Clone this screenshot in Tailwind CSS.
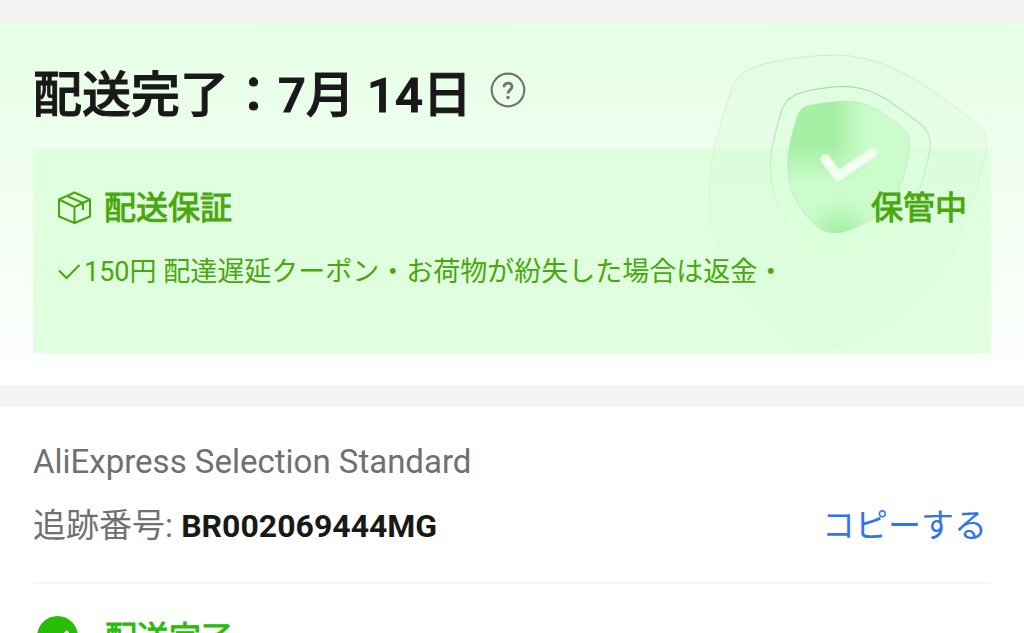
<!DOCTYPE html>
<html lang="ja">
<head>
    <meta charset="UTF-8">
    <meta name="viewport" content="width=device-width, initial-scale=1.0">
    <title>配送完了</title>
    <script src="https://cdn.jsdelivr.net/npm/@tailwindcss/browser@4"></script>
</head>
<body class="bg-white font-['Roboto','Noto_Sans_CJK_JP',sans-serif] text-[#191919] overflow-hidden">
    <div class="h-[22px] bg-[#f4f4f4]"></div>

    <!-- Delivery status -->
    <header class="relative bg-linear-to-b from-[#e5ffe5] to-white px-[33px] pt-[38px] pb-8">
        <div class="flex items-start">
            <h1 class="text-[49px] leading-[72px] font-medium [-webkit-text-stroke:1px_currentColor]">配送完了：7月 14日</h1>
            <button type="button" aria-label="ヘルプ" class="ml-[18px] mt-3">
                <svg class="size-9" viewBox="0 0 36 36" fill="none" stroke="#707570" stroke-width="2.2">
                    <circle cx="18" cy="18" r="16.3"/>
                    <path d="M14 15.200c0-5.400 8-5.400 8-.6 0 3.200-4 3.400-4 7" stroke-width="2.800"/>
                    <circle cx="18" cy="25.500" r="1.800" fill="#707570" stroke="none"/>
                </svg>
            </button>
        </div>

        <!-- Guarantee card -->
        <section class="mt-4 h-[205px] bg-[#dfffdf] px-6 pt-9 text-[#49a80d]">
            <div class="relative z-10 flex items-center text-[32px] leading-[48px]">
                <svg class="size-9 mr-[11px]" viewBox="0 0 36 36" fill="none" stroke="currentColor" stroke-width="2" stroke-linejoin="round">
                    <path d="M17.500 2.500 33 9.500v17L17.500 33 2 26.500v-17zM2 9.500l15.500 7.500L33 9.500M17.500 17v16M10 6 26 13v7"/>
                </svg>
                <h2 class="[-webkit-text-stroke:1px_currentColor]">配送保証</h2>
                <span class="ml-auto [-webkit-text-stroke:1px_currentColor]">保管中</span>
            </div>
            <p class="relative z-10 mt-5 flex items-center text-[27px] leading-10">
                <svg class="w-[27px] h-6 shrink-0" viewBox="0 0 27 24" fill="none" stroke="currentColor" stroke-width="2">
                    <path d="M2 10.500 9.500 18 22.500 5"/>
                </svg>
                150円 配達遅延クーポン・お荷物が紛失した場合は返金・
            </p>
        </section>

        <!-- Shield artwork -->
        <svg class="absolute top-8 right-[34px] w-[282px] h-[300px]" viewBox="54 42 846 900" fill="none">
            <defs>
                <linearGradient id="outer" x1="0" y1="0" x2="0" y2="1">
                    <stop offset="0" stop-color="#c8f5c8" stop-opacity=".2"/>
                    <stop offset="1" stop-color="#d0f8d0" stop-opacity=".12"/>
                </linearGradient>
                <linearGradient id="line" x1="0" y1="0" x2="0" y2="1">
                    <stop offset="0" stop-color="#a0cfa0" stop-opacity=".75"/>
                    <stop offset=".5" stop-color="#a8d8a8" stop-opacity=".35"/>
                    <stop offset=".8" stop-color="#b0e0b0" stop-opacity="0"/>
                </linearGradient>
                <linearGradient id="fade" x1="0" y1="0" x2="1" y2="0">
                    <stop offset=".4" stop-color="#a6f0a6"/>
                    <stop offset=".75" stop-color="#ccfccc" stop-opacity="0"/>
                </linearGradient>
                <linearGradient id="fall" x1="0" y1="0" x2="0" y2="1">
                    <stop offset=".35" stop-color="#fff"/>
                    <stop offset=".62" stop-color="#000"/>
                </linearGradient>
                <mask id="topMask">
                    <use href="#core" fill="url(#fall)"/>
                </mask>
                <radialGradient id="glowBottom" gradientUnits="userSpaceOnUse" cx="450" cy="590" r="140">
                    <stop offset="0" stop-color="#a4f0a4"/>
                    <stop offset=".4" stop-color="#b0f4b0" stop-opacity=".9"/>
                    <stop offset="1" stop-color="#c8fbc8" stop-opacity="0"/>
                </radialGradient>
                <path id="core" d="M350 198Q400 186 470 184Q520 184 570 214L636 262Q662 284 658 324Q648 400 622 462Q570 545 450 578Q410 582 385 562Q296 486 293 380Q292 320 322 228Q330 206 350 198Z"/>
            </defs>
            <path d="M210 75Q330 45 440 45Q520 47 600 80Q690 120 780 190L855 245Q896 275 889 330Q862 450 818 570Q790 650 715 735Q560 910 400 935Q330 940 280 900Q90 720 62 540Q50 400 78 300L125 145Q150 90 210 75Z" fill="url(#outer)" stroke="url(#line)" stroke-width="3" stroke-opacity=".5"/>
            <path d="M335 157Q400 140 465 139Q530 141 590 178L690 250Q726 280 720 325Q708 400 680 470Q630 600 450 652Q400 664 360 632Q244 520 241 385Q242 310 278 203Q295 168 335 157Z" fill="#dcffdc" fill-opacity=".5" stroke="url(#line)" stroke-width="4"/>
            <use href="#core" fill="#ccfccc"/>
            <use href="#core" fill="url(#fade)" mask="url(#topMask)"/>
            <use href="#core" fill="url(#glowBottom)"/>
            <use href="#core" stroke="#aee0ae" stroke-opacity=".5" stroke-width="3"/>
            <path d="M406 357 444 408 546 339" stroke="#f0fff0" stroke-width="29" stroke-linecap="round" stroke-linejoin="round"/>
        </svg>
    </header>

    <div class="h-[22px] bg-[#f4f4f4]"></div>

    <!-- Tracking details -->
    <main class="px-[33px] pt-[31px]">
        <p class="text-[33px] leading-12 text-[#707070]">AliExpress Selection Standard</p>
        <div class="mt-4 flex items-center justify-between text-[33px] leading-12">
            <p class="text-[#707070]">追跡番号: <strong class="text-[32px] font-bold text-[#191919]">BR002069444MG</strong></p>
            <button type="button" class="mr-1 text-[#3274f0]">コピーする</button>
        </div>
        <hr class="mt-8 border-0 h-[2px] bg-[#f5f5f5]">
        <div class="mt-8 flex items-start pl-1 text-[32px] leading-[44px] text-[#28bd06]">
            <svg class="size-[41px] mr-[27px]" viewBox="0 0 41 41" fill="none">
                <circle cx="20.500" cy="20.500" r="20.500" fill="currentColor"/>
                <path d="M11 20.500 18 27.500 31 15.500" stroke="#fff" stroke-width="3.500"/>
            </svg>
            <h2 class="[-webkit-text-stroke:1px_currentColor]">配送完了</h2>
        </div>
    </main>
</body>
</html>
